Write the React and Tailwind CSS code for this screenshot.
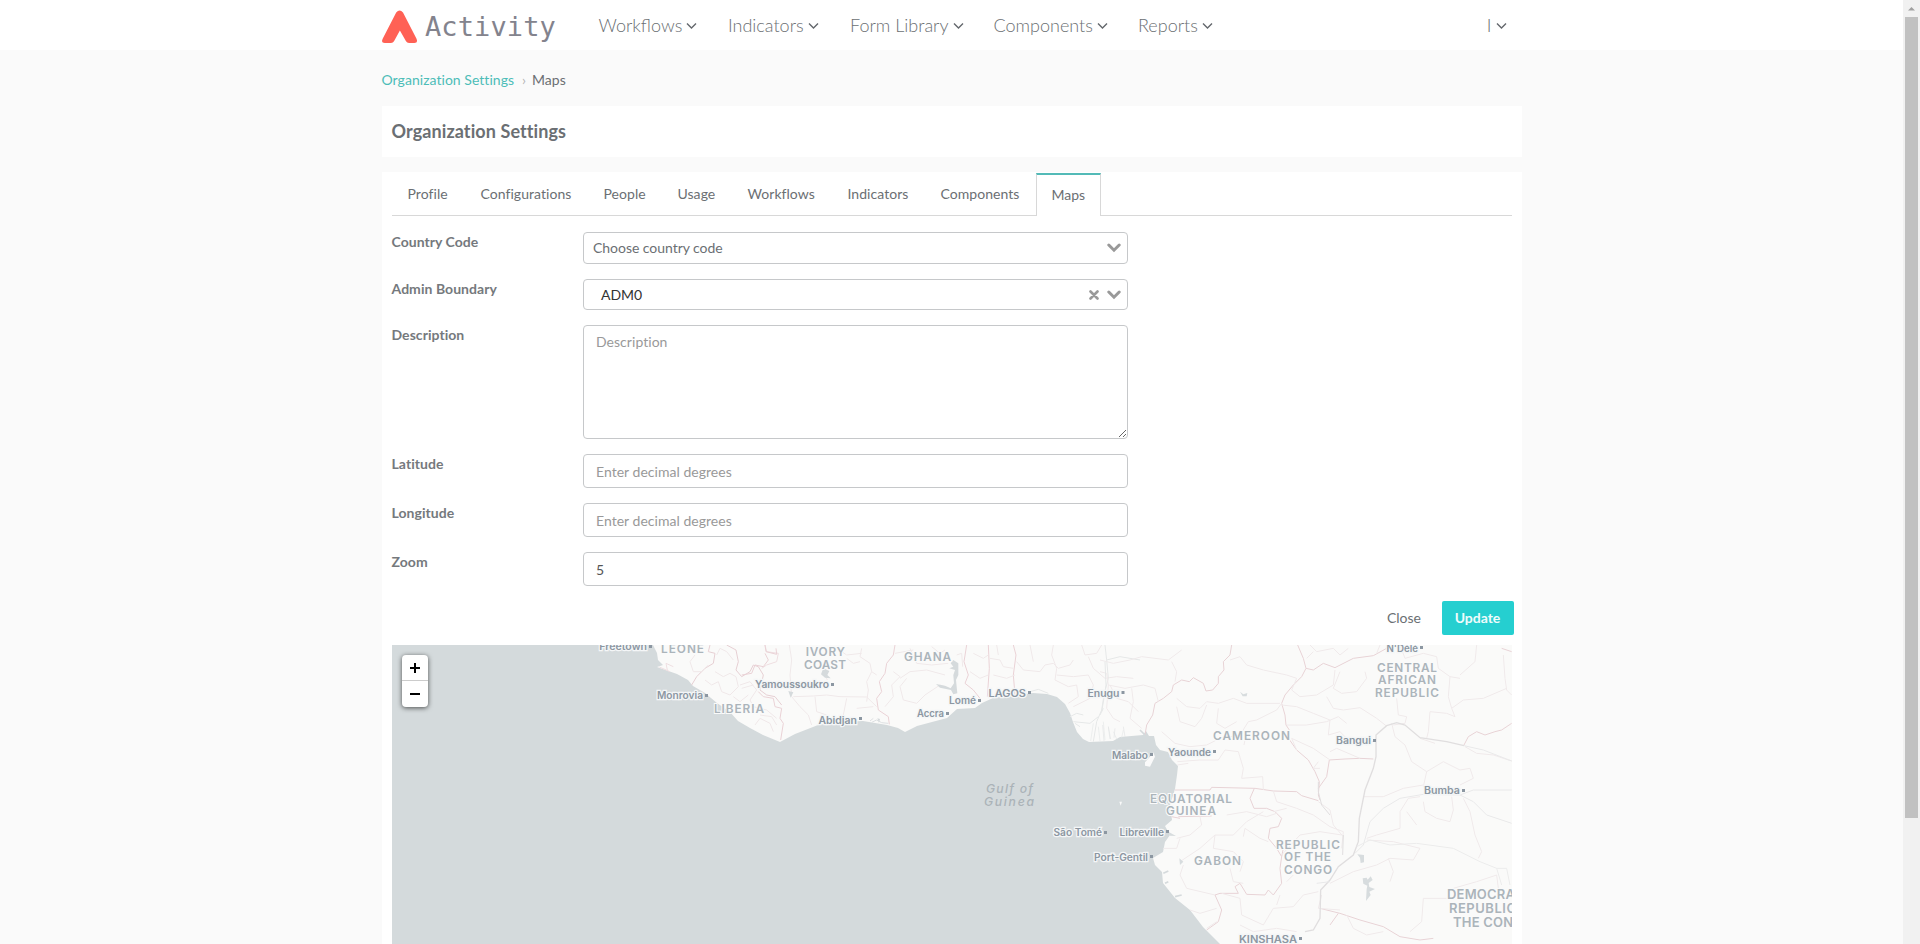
import React from "react";

const NAV = [
  ["Workflows", "w-[129.5px]"],
  ["Indicators", "w-[122px]"],
  ["Form Library", "w-[143.5px]"],
  ["Components", "w-[144.5px]"],
  ["Reports", "w-[100px]"],
];

const TABS = [
  ["Profile", "w-[73px]"],
  ["Configurations", "w-[123px]"],
  ["People", "w-[74px]"],
  ["Usage", "w-[70px]"],
  ["Workflows", "w-[100px]"],
  ["Indicators", "w-[93px]"],
  ["Components", "w-[111px]"],
];

function NavChevron() {
  return (
    <svg className="ml-[4px] mt-[2px] h-[10px] w-[11px] shrink-0" viewBox="0 0 11 10" fill="none">
      <path d="M1 2.6 5.5 7.1 10 2.6" stroke="#63676c" strokeWidth="1.4" />
    </svg>
  );
}

function SelectChevron() {
  return (
    <svg className="h-[10px] w-[14px]" viewBox="0 0 14 10" fill="none">
      <path d="M1.8 2 7 7.2 12.2 2" stroke="#999" strokeWidth="3" strokeLinecap="round" />
    </svg>
  );
}

function Logo() {
  return (
    <div className="flex h-[50px] w-[217px] items-start">
      <svg className="mt-[10px] h-[34px] w-[36px] shrink-0" viewBox="0 0 36 34">
        <path
          d="M14.2 2.6 Q17.6 -1.8 21 2.6 L34.4 28.4 Q36.4 33 32.4 33 H27 Q25 33 24 31.2 L17.9 20.6 L12 31.2 Q11 33 9 33 H2.8 Q-1.4 33 0.8 28.4 Z"
          fill="#ff6155"
        />
      </svg>
      <span className="ml-[7.5px] mt-[8px] font-['DejaVu_Sans_Mono',monospace] text-[27px] leading-[38px] tracking-[0.1px] text-[#83838d]">
        Activity
      </span>
    </div>
  );
}

function Row({ label, children }) {
  return (
    <div className="mb-[15px] flex">
      <label className="w-[191.5px] text-[14px] leading-[20px] font-bold tracking-[0.05px] text-[#75797d]">
        {label}
      </label>
      <div className="flex w-[545px]">{children}</div>
    </div>
  );
}

const COUNTRIES = [
  [["LEONE", 661, 704, 653]],
  [["LIBERIA", 714, 764, 712.7]],
  [["IVORY", 805.7, 845, 656], ["COAST", 804, 846, 668.5]],
  [["GHANA", 904, 951, 661]],
  [["CAMEROON", 1213, 1290, 739.5]],
  [["CENTRAL", 1377, 1437, 671.7], ["AFRICAN", 1378, 1436, 684.3], ["REPUBLIC", 1375, 1439, 697]],
  [["EQUATORIAL", 1150, 1232, 802.6], ["GUINEA", 1166, 1216, 815.3]],
  [["GABON", 1194, 1241, 865.2]],
  [["REPUBLIC", 1276, 1340, 848.5], ["OF THE", 1284, 1331, 861.1], ["CONGO", 1284, 1332, 873.6]],
];

const CITIES = [
  ["Freetown", 599.3, 647, 650, 646.5],
  ["Monrovia", 657, 703, 699, 695.5],
  ["Yamoussoukro", 755, 829, 688, 684.5],
  ["Abidjan", 818.5, 857, 723.5, 718.5],
  ["Accra", 917, 944, 716.5, 713.5],
  ["Lomé", 949, 976, 704, 700.5],
  ["LAGOS", 988.5, 1026, 697, 692.5],
  ["Enugu", 1087.5, 1119.5, 697, 692.5],
  ["Malabo", 1112, 1148, 758.5, 754.5],
  ["Yaounde", 1168, 1211, 756, 751.5],
  ["Bangui", 1336, 1371, 744, 740.5],
  ["N'Délé", 1386.5, 1418, 652, 647.5],
  ["Bumba", 1424, 1460, 794, 790.5],
  ["São Tomé", 1053.5, 1102, 836, 832.5],
  ["Libreville", 1119.5, 1164, 835.5, 831.5],
  ["Port-Gentil", 1094, 1148, 860.5, 856.5],
  ["KINSHASA", 1239, 1297, 942.5, 938.5],
];

function WestAfrica() {
  return (
    <g transform="translate(380 635) scale(.33333)" strokeWidth="3">
      <g stroke="#efdfe2">
        <path d="M990 30 L985 50 1005 55 1000 85 975 100 950 125 935 150" stroke="#e6cfd3" />
        <path d="M1040 30 L1068 45 1075 80 1068 105 1085 125 1110 110 1120 90 1135 95 1150 120 1140 165 1160 180 1185 185 1205 210" stroke="#e6cfd3" />
        <path d="M1155 30 L1160 50 1195 55 1190 80 1160 90 1145 100" />
        <path d="M862 105 L858 85 880 95 M838 96 L870 110" />
      </g>
      <g stroke="#f0e8e9">
        <path d="M945 60 L930 80 940 110 965 110 985 90 M1005 110 L1030 125 1050 115 1068 125 1075 155 1050 180 1025 170 1015 140 995 150 975 135" />
        <path d="M1010 60 L1020 40 1040 50 1060 75 M1080 150 L1110 140 1130 165 1110 195 1120 215 1160 225 1190 250" />
        <path d="M1060 185 L1080 200 1105 180 M1125 270 L1140 250 1170 265 1180 290" />
      </g>
    </g>
  );
}

function GulfCoast() {
  return (
    <g transform="translate(740 635) scale(.33333)" strokeWidth="3">
      <g stroke="#ead2d6">
        <path d="M75 30 L78 50 110 58 108 40 M75 55 L85 75 70 95 45 90 35 115 5 120 M55 170 L70 185 100 190 105 215 125 220 120 250 130 265 122 315" />
        <path d="M465 30 L460 60 440 85 435 115 418 140 425 170 410 190 415 225 445 245 448 268" />
        <path d="M680 30 L672 80 685 120 675 145 700 165 720 190 M745 30 L748 100 742 185 M820 30 L828 60 820 120 825 180" />
      </g>
      <g stroke="#f0e9ea">
        <path d="M148 30 L155 75 150 120 155 185 180 215 205 240 215 270 M160 185 L220 183 260 180 300 185 380 186 410 215 M250 110 L262 135" />
        <path d="M365 40 L360 65 390 85 395 110 380 140 385 165 380 200 M290 40 L320 60 365 55 M320 70 L340 85 360 80" />
        <path d="M410 120 L395 110 M460 110 L480 125 455 150 460 185 435 215 M480 130 L510 110 560 105 615 120 M500 130 L480 155 490 195 530 205 555 180 600 150 640 165" />
        <path d="M465 55 L520 45 M510 40 L530 85 575 90 625 85 M575 35 L600 55 615 45 M650 60 L665 55 668 95 M700 55 L730 70 745 60 M690 110 L720 130 745 120" />
        <path d="M750 70 L780 75 790 95 820 100 M760 120 L800 130 825 120 M770 30 L775 60 M830 80 L850 105 900 110 915 90 940 85 955 100 990 90 1000 75 M870 30 L880 80" />
        <path d="M940 30 L935 60 950 100 945 135 985 155 1010 150 1015 185 985 205 M950 120 L1000 125 1045 120 1060 150 1050 190 1000 215" />
        <path d="M1025 30 L1035 60 1070 55 1085 30 M1045 65 L1060 100 1095 130 1130 125 1180 130 M1110 150 L1130 190 1165 200 1195 230" />
        <path d="M5 160 L40 150 M60 240 L95 245 110 270 M225 185 L230 230 260 240 M320 190 L310 240 M350 220 L400 215" />
      </g>
      <g stroke="#e6e8e8">
        <path d="M1095 30 L1100 75 1140 65 1200 75 M1100 75 L1105 130 1092 180 1085 225 1070 260 1060 320 M870 170 L895 163 925 175 M990 245 L1010 235 1030 240 M1000 260 L1050 265 1075 245 M1005 265 L1020 275" />
        <path d="M1075 275 L1080 318 M1090 260 L1095 315 M1105 275 L1112 312 M1120 290 L1130 312 M1060 265 L1052 318 M1150 285 L1145 308" strokeWidth="2" />
      </g>
      <path d="M640 75 L655 85 655 120 648 135 652 175 640 178 633 165 600 158 588 147 615 152 632 160 642 145 640 120 645 105 628 100 640 95 632 85Z" fill="#d5dadc" />
      <path d="M250 100 L268 108 262 120 272 130 255 128 243 118Z M145 168 L160 172 152 188Z M412 250 L420 252 417 264Z" fill="#d5dadc" />
      <path d="M395 262 L410 255 425 263 445 265 M390 258 L400 250" stroke="#dde0e2" />
    </g>
  );
}

function CentralAfrica() {
  return (
    <g transform="translate(1100 635) scale(.33333)" strokeWidth="3">
      <g stroke="#e8d3d6">
        <path d="M395 30 L390 60 370 80 372 105 355 125 355 145 338 165 318 168 310 145 280 128 268 140 245 135 220 150 215 170 190 190 165 205 158 240 140 270 135 300" />
        <path d="M593 30 L610 70 618 100 605 125 580 150 555 180 545 205 555 240 558 270 568 285 562 305 590 345 625 375 645 410 658 440 655 480 660 495 M618 100 L640 105 670 85 705 98 760 70 820 62 860 40 868 30" />
        <path d="M225 465 L330 465 335 457 465 460 520 468 590 470 605 482 655 497 M463 460 L450 490 462 520 500 520 525 530 545 550 535 575 510 580 505 610 530 640 545 665 540 700 545 745 520 780 505 765 495 780 440 778 420 745 405 755 415 775 360 775 345 780 365 825 355 860 320 885" />
        <path d="M655 460 L680 425 688 375 735 372 780 370 820 372 M235 545 L335 543 M215 545 L240 550" />
        <path d="M1235 265 L1205 285 1185 290 1155 300 1130 290 1105 305 1092 330 M1205 40 L1235 50" />
        <path d="M545 665 L550 640 M660 820 L720 835 780 855 850 875 900 905 960 915 1000 910 M715 835 L690 870" />
      </g>
      <g stroke="#f0eaeb">
        <path d="M0 75 L40 85 90 75 125 65 205 75 225 60 245 45 M215 80 L230 110 225 140 M0 110 L20 115 25 150 75 160 130 150 165 160 175 200 M25 150 L20 220 40 250 60 260 M95 160 L100 200 90 250 125 280" />
        <path d="M320 200 L355 205 400 190 440 205 540 205 M390 75 L420 65 440 90 490 105 560 120 590 130 M230 190 L260 215 300 220 320 200 M230 215 L240 260 285 275 305 250 320 210" />
        <path d="M185 290 L225 325 270 335 320 330 360 310 420 300 445 260 470 255 530 225 545 205 M355 220 L350 265 375 280 410 260" />
        <path d="M232 380 L300 375 355 375 375 345 415 350 430 400 425 430 488 425 490 465 M432 330 L440 290 M232 390 L265 385" />
        <path d="M545 210 L590 215 640 235 690 255 685 300 720 290 745 315 800 330 825 315 M560 270 L620 270 680 260 715 245 740 265" />
        <path d="M590 130 L575 165 600 185 650 180 700 150 705 105 M720 110 L700 160 725 175 770 170 800 130 795 110 M680 185 L700 220 730 225 780 218 830 250 858 272" />
        <path d="M630 30 L650 50 700 40 720 60 745 40 M640 50 L620 70 M840 30 L830 55 M690 350 L710 340 780 370" />
        <path d="M900 30 L915 70 970 55 1010 65 1015 100 1050 125 1045 185 1055 220 1090 195 1150 190 1220 160 M890 190 L895 240 920 245 915 265 880 270 M1055 220 L1065 245 1040 235 990 230 985 290 980 310" />
        <path d="M1130 30 L1125 80 1080 120 M1210 60 L1215 130 1220 165 1235 180 M1050 125 L1080 130" />
        <path d="M875 265 L885 305 915 330 935 380 980 410 1030 380 1080 405 1110 400 1120 430 1080 450 M980 410 L970 455 1000 480 M960 310 L1005 325" />
        <path d="M1095 335 L1130 355 1180 360 1235 378 M790 485 L850 485 910 460 970 450 M970 500 L975 530 1010 550 1050 560 1060 525 1055 485 M1090 490 L1110 530 1125 600 1145 650 1135 670" />
        <path d="M590 345 L575 310 640 340 690 375 M655 500 L690 525 700 570 730 605 M660 400 L640 400 655 380" />
        <path d="M520 468 L530 500 590 520 640 540 690 575 730 590 725 640 M560 520 L520 530 M380 540 L440 530 500 545 530 535 M230 610 L270 600 305 570 300 545 M190 640 L230 640 240 610 M345 600 L340 640 400 650 430 680 420 710 M345 600 L400 600 440 560 490 530 M240 680 L300 640 345 600" />
        <path d="M430 605 L435 580 480 610 505 620 M250 690 L240 720 260 760 345 780 M390 700 L400 740 430 745 M545 660 L600 600 660 590 725 600" />
        <path d="M270 825 L300 835 350 820 M320 880 L350 860 M365 775 L420 790 425 840 490 870 520 820 580 815 610 780 655 770 M420 870 L460 890 530 880 590 890 M540 780 L530 810 M560 740 L580 720" />
        <path d="M665 780 L655 820 720 825 M690 745 L760 710 830 690 870 670 940 675 960 640 880 620 800 615 M865 670 L880 710 870 740 M970 790 L965 860 930 890 M1060 760 L1130 740 1190 720" />
        <path d="M800 610 L830 600 900 580 900 530 925 490 960 485 M920 530 L950 570 M970 790 L1040 790 M1190 720 L1195 760" />
        <path d="M740 840 L760 880 800 900 850 890" />
      </g>
      <g stroke="#e0dedf">
        <path d="M15 80 L18 150 12 190 5 230 M10 220 L0 240" stroke="#e6e8e8" />
        <path d="M615 890 L640 885 660 850 662 765 690 735 715 695 760 660 775 620 778 550 795 465 820 400 828 365 828 300 860 272 890 263 915 270 960 308 1040 320 1092 332" strokeWidth="4" />
        <path d="M650 745 L690 740 M765 655 L790 630 810 560 850 520 900 490 970 478 1080 480 1120 500 1160 540 1235 565 M1080 480 L1120 465 1235 465 M1092 332 L1150 345 1235 378" stroke="#e9e9ea" />
        <path d="M770 635 L810 615 870 630 950 625 1060 640 1140 680 1190 700 1205 750 M1190 700 L1220 700 1230 750" stroke="#ececec" />
        <path d="M655 440 L655 470 665 510 690 540 M730 600 L728 660" />
      </g>
      <path d="M788 730 L800 728 803 734 812 724 818 735 806 744 808 756 825 762 808 770 812 780 798 798 800 762 802 752 790 746Z M772 658 L792 660 792 682 782 684 780 668Z M420 170 L430 178 442 174 440 184 428 184Z M238 670 L250 680 240 690Z M205 590 L228 603 210 602Z" fill="#d7dcde" />
      <path d="M135 382 L150 365 160 352 165 365 150 395 135 392Z M58 500 L66 500 62 512Z M-18 605 L-10 590 -8 604Z" fill="#fafafa" />
      <path d="M190 715 L205 708 M195 745 L205 740 M225 785 L245 780 M120 285 L135 300" stroke="#d5dadc" strokeWidth="5" />
      <g stroke="#e2e4e5" strokeWidth="2">
        <path d="M8 270 L12 318 M25 275 L30 312 M45 280 L42 308 M70 275 L75 305" />
      </g>
    </g>
  );
}

function MapView() {
  return (
    <div className="relative h-[299px] w-[1120px] overflow-hidden bg-[#d4dadc]">
      <svg
        className="block h-[299px] w-[1120px] font-['Inter','Noto_Sans',sans-serif]"
        viewBox="392 645 1120 299"
        fill="none"
      >
        <path
          d="M653 645 L657 653 658 660 663 665 657 667 677 674 688 680 693 686 705 693 717 703 730 712 738 721 750 728 763 735 780 742 795 734 813 727 818 725 840 722 863 721 887 725 898 728 905 732 917 726 947 718 957 709 975 708 982 703 993 698 1017 695 1033 693 1047 694 1057 697 1065 704 1070 713 1073 722 1077 732 1083 739 1089 742 1113 741 1120 737 1143 735 1146 731 1149 736 1154 736 1156 745 1160 750 1168 752 1172 760 1178 766 1177 775 1175 789 1170 805 1172 820 1165 826 1170 835 1165 842 1163 852 1153 858 1155 865 1162 872 1163 883 1175 898 1190 910 1203 927 1220 944 1512 944 1512 645Z"
          fill="#fafaf9"
        />
        <WestAfrica />
        <GulfCoast />
        <CentralAfrica />
        <g fill="#abb4ba" stroke="#fafafa" strokeWidth="2" paintOrder="stroke" fontSize="11.8" fontWeight="600">
          {COUNTRIES.map((lines) => (
            <text key={lines[0][0] + lines[0][1]}>
              {lines.map(([t, a, b, y]) => (
                <tspan key={t} x={a} y={y} textLength={b - a}>
                  {t}
                </tspan>
              ))}
            </text>
          ))}
          <text fontSize="13">
            <tspan x="1447" y="899" textLength="68">DEMOCRA</tspan>
            <tspan x="1449" y="913" textLength="67">REPUBLIC</tspan>
            <tspan x="1453" y="926.7" textLength="60">THE CON</tspan>
          </text>
        </g>
        <text fill="#abb3b8" fontSize="12.2" fontWeight="500" fontStyle="italic">
          <tspan x="986" y="793" textLength="47">Gulf of</tspan>
          <tspan x="984" y="805.5" textLength="50">Guinea</tspan>
        </text>
        <g fill="#8c97a2" fontSize="10" fontWeight="600">
          {CITIES.map(([t, a, b, y, dot]) => (
            <g key={t}>
              <text
                x={a}
                y={y}
                textLength={b - a}
                lengthAdjust="spacingAndGlyphs"
                stroke="#f4f6f7"
                strokeWidth="2.4"
                paintOrder="stroke"
              >
                {t}
              </text>
              <rect x={b + 2} y={dot - 1.5} width="3" height="3" />
            </g>
          ))}
        </g>
      </svg>
      <div className="absolute left-[10px] top-[10px] w-[26px] rounded-[4px] bg-white shadow-[0_1px_5px_rgba(0,0,0,0.65)]">
        <div className="flex h-[26px] items-center justify-center border-b border-[#ccc]">
          <svg className="h-[10px] w-[10px]" viewBox="0 0 10 10">
            <path d="M4 0h2v4h4v2H6v4H4V6H0V4h4z" />
          </svg>
        </div>
        <div className="flex h-[26px] items-center justify-center pl-px">
          <svg className="h-[2px] w-[10px]" viewBox="0 0 10 2">
            <path d="M0 0h10v2H0z" />
          </svg>
        </div>
      </div>
    </div>
  );
}

const FIELD =
  "w-full rounded-[4px] border border-[#c6c8ca] bg-white px-[12px] text-[14px] leading-[20px] text-[#555] outline-none placeholder:text-[#999]";

export default function App() {
  return (
    <div className="flex h-[944px] w-[1920px] overflow-hidden bg-[#fafafa] font-['Lato',sans-serif] text-[14px] leading-[20px] text-[#6b6f73]">
      <div className="w-[1903px]">
        <header className="h-[50px] bg-white">
          <div className="mx-auto flex h-[50px] w-[1140px]">
            <Logo />
            <nav className="flex h-[50px] flex-1 items-center text-[18px] font-light text-[#6b6f73]">
              {NAV.map(([t, w]) => (
                <a key={t} className={`flex items-center whitespace-nowrap ${w}`}>
                  {t}
                  <NavChevron />
                </a>
              ))}
              <a className="ml-auto mr-[15px] flex items-center">
                I<NavChevron />
              </a>
            </nav>
          </div>
        </header>
        <main className="mx-auto w-[1140px]">
          <div className="flex h-[56px] items-center pt-[4px]">
            <a className="tracking-[0.04px] text-[#4dbdb8]">Organization Settings</a>
            <span className="ml-[8px] mr-[6px] text-[#b5b5b5]">›</span>
            <span>Maps</span>
          </div>
          <section className="flex h-[51px] items-center bg-white px-[10px] pb-[2px]">
            <h1 className="text-[18px] font-bold tracking-[0.09px]">Organization Settings</h1>
          </section>
          <section className="mt-[15px] bg-white px-[10px] pt-px">
            <div className="flex h-[43px] border-b border-[#d8d8d8]">
              {TABS.map(([t, w]) => (
                <a key={t} className={`shrink-0 pl-[16px] pt-[11px] tracking-[0.05px] ${w}`}>
                  {t}
                </a>
              ))}
              <a className="h-[43px] border-x border-t-2 border-[#d8d8d8] border-t-[#52bab7] bg-white px-[15px] pt-[10px]">
                Maps
              </a>
            </div>
            <form className="pt-[16px]">
              <Row label="Country Code">
                <div className="flex h-[32px] w-full items-center justify-between rounded-[4px] border border-[#c6c8ca] pl-[9px] pr-[6px]">
                  <span className="tracking-[-0.04px]">Choose country code</span>
                  <SelectChevron />
                </div>
              </Row>
              <Row label="Admin Boundary">
                <div className="flex h-[31px] w-full items-center rounded-[4px] border border-[#c6c8ca] pl-[17px] pr-[6px]">
                  <span className="text-[#333]">ADM0</span>
                  <svg className="ml-auto mr-[8px] h-[10px] w-[10px]" viewBox="0 0 10 10">
                    <path d="M1.5 1.5l7 7M8.5 1.5l-7 7" stroke="#999" strokeWidth="2.6" strokeLinecap="round" />
                  </svg>
                  <SelectChevron />
                </div>
              </Row>
              <Row label="Description">
                <textarea className={`${FIELD} h-[114px] resize py-[6px] tracking-[0.04px]`} placeholder="Description" />
              </Row>
              <Row label="Latitude">
                <input className={`${FIELD} h-[34px] tracking-[0.03px]`} placeholder="Enter decimal degrees" />
              </Row>
              <Row label="Longitude">
                <input className={`${FIELD} h-[34px] tracking-[0.03px]`} placeholder="Enter decimal degrees" />
              </Row>
              <Row label="Zoom">
                <input className={`${FIELD} h-[34px]`} defaultValue="5" />
              </Row>
            </form>
            <div className="-mr-[2px] mb-[10px] flex h-[34px] items-center justify-end">
              <button type="button" className="mr-[20.5px]">
                Close
              </button>
              <button type="button" className="h-[34px] w-[72px] rounded-[2px] bg-[#25cfd0] font-bold text-[#effcfc]">
                Update
              </button>
            </div>
            <MapView />
          </section>
        </main>
      </div>
      <div className="flex w-[17px] flex-col items-center bg-[#f1f1f1]">
        <svg className="h-[17px] w-[17px]" viewBox="0 0 17 17">
          <path d="M5 10.5 8.5 7 12 10.5z" fill="#a0a0a0" />
        </svg>
        <div className="h-[801px] w-[13px] bg-[#c1c1c1]" />
      </div>
    </div>
  );
}
